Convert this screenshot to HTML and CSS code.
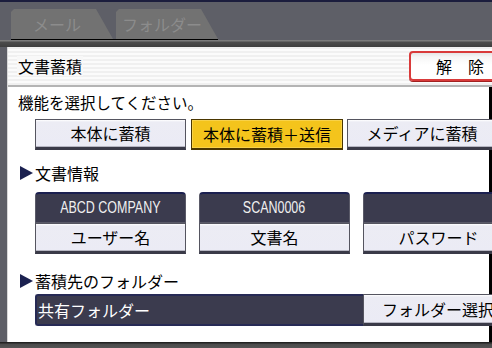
FILE: index.html
```html
<!DOCTYPE html>
<html lang="ja">
<head>
<meta charset="utf-8">
<link rel="stylesheet" href="styles.css">
</head>
<body>
<div class="frame">
  <div class="tabs">
    <div class="tab"><span>メール</span></div>
    <div class="tab"><span>フォルダー</span></div>
  </div>
  <div class="tabline"></div>
  <div class="band"></div>
  <div class="panel">
    <div class="header">
      <div class="title">文書蓄積</div>
      <div class="cancel">解　除</div>
    </div>
    <div class="content">
      <div class="prompt">機能を選択してください。</div>
      <div class="btnrow">
        <div class="btn w151">本体に蓄積</div>
        <div class="btn btn-on w152">本体に蓄積＋送信</div>
        <div class="btn w150">メディアに蓄積</div>
      </div>
      <div class="heading"><svg class="tri" width="14" height="14" viewBox="0 0 14 14"><polygon points="0,0 13,7 0,14" fill="#1b2150"/></svg>文書情報</div>
      <div class="fields">
        <div class="fieldcol">
          <div class="dark"><span class="narrow">ABCD COMPANY</span></div>
          <div class="btn sub">ユーザー名</div>
        </div>
        <div class="fieldcol">
          <div class="dark"><span class="narrow">SCAN0006</span></div>
          <div class="btn sub">文書名</div>
        </div>
        <div class="fieldcol">
          <div class="dark"></div>
          <div class="btn sub">パスワード</div>
        </div>
      </div>
      <div class="heading h2"><svg class="tri" width="14" height="14" viewBox="0 0 14 14"><polygon points="0,0 13,7 0,14" fill="#1b2150"/></svg>蓄積先のフォルダー</div>
      <div class="folderrow">
        <div class="folderfield">共有フォルダー</div>
        <div class="btn folderbtn">フォルダー選択</div>
      </div>
    </div>
  </div>
  <div class="bottom"></div>
</div>
</body>
</html>
```

FILE: styles.css
```css
html, body {
  margin: 0;
  padding: 0;
}
body {
  width: 492px;
  height: 348px;
  overflow: hidden;
  background: #5e5f67;
  font-family: "Noto Sans CJK JP", "Noto Sans", sans-serif;
  color: #000;
}
.frame {
  border-top: 2px solid #1b1d3d;
  height: 346px;
  display: flex;
  flex-direction: column;
}
.tabs {
  display: flex;
  gap: 3px;
  padding: 7px 0 0 11px;
  height: 30px;
}
.tab {
  width: 102px;
  height: 30px;
  background: #727272;
  clip-path: polygon(0 3px, 3px 0, calc(100% - 17px) 0, 100% 100%, 0 100%);
  color: #8c8c8c;
  font-size: 16px;
  line-height: 30px;
  box-sizing: border-box;
  padding-left: 22px;
}
.tab + .tab {
  padding-left: 6px;
}
.tabline {
  margin-left: 11px;
  width: 207px;
  height: 1px;
  background: #000;
}
.band {
  height: 7px;
  background: linear-gradient(#7b7b7b 0, #7b7b7b 1px, #4c4c4c 2px, #3e3e3e 100%);
}
.panel {
  margin-left: 7px;
  border-left: 1px solid #d8d8d8;
  background: #fff;
  height: 295px;
  overflow: hidden;
  display: flex;
  flex-direction: column;
}
.header {
  height: 38px;
  border-bottom: 2px solid #b4b4b4;
  background: repeating-linear-gradient(#f0f0f0 0, #f0f0f0 2px, #fbfbfb 2px, #fbfbfb 4px);
  display: flex;
  align-items: flex-start;
}
.title {
  margin: 9px 0 0 9px;
  padding: 0 1px;
  background: #f8f8f8;
  font-size: 16px;
  line-height: 20px;
}
.cancel {
  margin: 4px -17px 0 auto;
  width: 100px;
  height: 30px;
  box-sizing: border-box;
  border: 2px solid #d93a3a;
  border-radius: 4px;
  background: linear-gradient(#e6e6e6 0, #f6f6f6 4px, #fff 12px);
  box-shadow: 0 1px 0 #a02020;
  font-size: 16px;
  line-height: 26px;
  padding-left: 25px;
}
.content {
  flex: 1;
  padding-left: 10px;
  border-right: 3px solid #000;
}
.prompt {
  margin-top: 4px;
  font-size: 15.5px;
  line-height: 22px;
}
.btnrow {
  margin: 6px 0 0 17px;
  display: flex;
  gap: 5px;
}
.btn {
  flex: none;
  height: 31px;
  box-sizing: border-box;
  border: 1px solid #555560;
  border-bottom: 3px solid #3a3a48;
  background: linear-gradient(#ffffff 0, #ececf4 2px, #ebebf5 100%);
  box-shadow: inset 0 -1px 0 #b6b6c2;
  font-size: 16px;
  line-height: 27px;
  text-align: center;
  white-space: nowrap;
}
.w151 { width: 151px; }
.w152 { width: 152px; }
.w150 { width: 150px; margin-left: -1px; }
.btn-on {
  border-color: #4a3600;
  border-bottom: 2px solid #4a3600;
  background: #f4c41c;
  box-shadow: inset 0 0 0 1px #f8d24a;
  line-height: 28px;
}
.heading {
  margin-top: 12px;
  font-size: 16px;
  line-height: 22px;
  display: flex;
  align-items: center;
}
.tri {
  margin: 0 1px 0 2px;
}
.fields {
  margin: 8px 0 0 17px;
  display: flex;
  gap: 13px;
}
.fieldcol {
  width: 151px;
  flex: none;
}
.dark {
  height: 31px;
  box-sizing: border-box;
  background: #3b3b4e;
  border: 1px solid #5a5a68;
  border-top: 2px solid #1b2050;
  border-radius: 4px 4px 0 0;
  color: #f0f0f0;
  text-align: center;
  font-family: "Liberation Sans", sans-serif;
  font-size: 16px;
  line-height: 28px;
}
.narrow {
  display: inline-block;
  transform: scaleX(0.78);
}
.btn.sub {
  height: 31px;
}
.h2 {
  margin-top: 16px;
}
.folderrow {
  margin: 2px 0 0 17px;
  display: flex;
}
.folderfield {
  flex: none;
  width: 328px;
  height: 32px;
  box-sizing: border-box;
  background: #3b3b4e;
  border: 2px solid #262a55;
  border-right: none;
  border-radius: 3px 0 0 3px;
  color: #fff;
  font-size: 16px;
  line-height: 28px;
  padding-left: 1px;
}
.folderbtn {
  width: 150px;
  height: 32px;
  line-height: 28px;
}
.bottom {
  flex: 1;
  background: linear-gradient(#222 0, #222 1px, #4a4a4a 2px, #555 100%);
}
```
